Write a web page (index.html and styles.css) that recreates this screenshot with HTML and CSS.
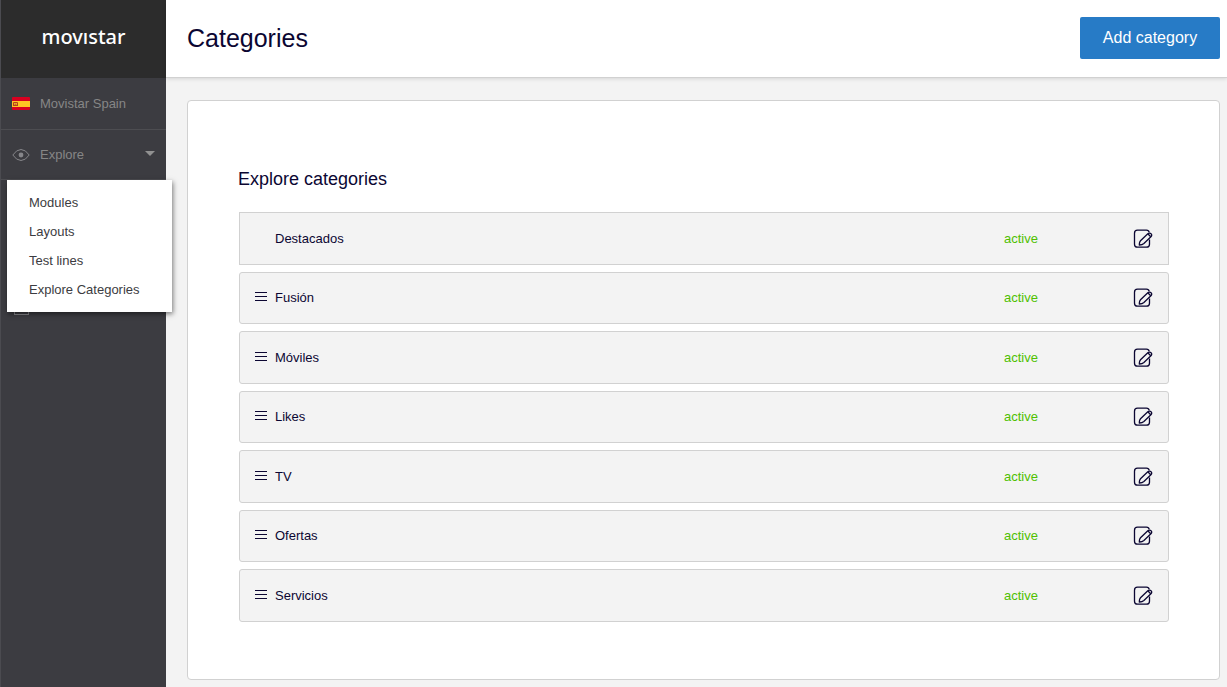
FILE: index.html
```html
<!DOCTYPE html>
<html lang="en">
<head>
<meta charset="utf-8">
<title>Categories</title>
<link rel="stylesheet" href="styles.css">
</head>
<body>
<svg class="sprite" aria-hidden="true">
  <symbol id="edit" viewBox="0 0 20 20">
    <path d="M16.200 3.400Q15.800 1.200 13.500 1.200H4.500A3 3 0 0 0 1.500 4.200V15.200A3 3 0 0 0 4.500 18.200H13.500A3 3 0 0 0 16.500 15.200V10.500"/>
    <path d="M14.800 4.700Q16.800 3.400 18.200 4.900Q19.300 6.300 17.900 7.800L10.900 14.400Q9.300 15.800 6.400 16Q6.100 13.300 7.500 11.700Z"/>
    <path d="M14.800 4.700 17.700 7.800"/>
  </symbol>
  <symbol id="grip" viewBox="0 0 12 10">
    <path d="M0 .5H12M0 4.500H12M0 8.500H12"/>
  </symbol>
</svg>
<div class="app">
  <aside class="sidebar">
    <a class="logo" href="#">movıstar</a>
    <nav class="nav">
      <a class="nav-item" href="#">
        <svg class="nav-icon" viewBox="0 0 18 14" aria-hidden="true">
          <rect x="0" y="0" width="18" height="13" rx="1" fill="#d80020"/>
          <rect x="0" y="4" width="18" height="6" fill="#ffc423"/>
          <path d="M1.500 9V5.500H5.500V9M2.500 7.200H4.500M1 8.500H6" fill="none" stroke="#b5431c"/>
        </svg>
        Movistar Spain
      </a>
      <div class="nav-group">
        <button class="nav-item" type="button" aria-expanded="true">
          <svg class="nav-icon" viewBox="0 0 18 14" aria-hidden="true">
            <path d="M.8 7Q4.500 1.500 9 1.500T17.200 7Q13.500 12.500 9 12.500T.8 7Z" fill="none" stroke="#86868a"/>
            <circle cx="9" cy="7" r="2.400" fill="#86868a"/>
          </svg>
          Explore
          <svg class="caret" viewBox="0 0 10 5" aria-hidden="true"><path d="M0 0H10L5 5Z" fill="#919191"/></svg>
        </button>
        <div class="menu">
          <a href="#">Modules</a>
          <a href="#">Layouts</a>
          <a href="#">Test lines</a>
          <a href="#">Explore Categories</a>
        </div>
      </div>
      <a class="nav-item nav-last" href="#" aria-label="More">
        <svg class="nav-icon" viewBox="0 0 18 14" aria-hidden="true"><rect x="2.500" y=".5" width="14" height="13" fill="none" stroke="#86868a"/></svg>
      </a>
    </nav>
  </aside>
  <main class="main">
    <header class="header">
      <h1>Categories</h1>
      <button class="add" type="button">Add category</button>
    </header>
    <section class="card">
      <h2>Explore categories</h2>
      <ul class="list">
        <li class="row fixed"><span class="grip"></span><span class="name">Destacados</span><span class="status">active</span><button class="edit" type="button" aria-label="Edit Destacados"><svg><use href="#edit"/></svg></button></li>
        <li class="row"><svg class="grip"><use href="#grip"/></svg><span class="name">Fusión</span><span class="status">active</span><button class="edit" type="button" aria-label="Edit Fusión"><svg><use href="#edit"/></svg></button></li>
        <li class="row"><svg class="grip"><use href="#grip"/></svg><span class="name">Móviles</span><span class="status">active</span><button class="edit" type="button" aria-label="Edit Móviles"><svg><use href="#edit"/></svg></button></li>
        <li class="row"><svg class="grip"><use href="#grip"/></svg><span class="name">Likes</span><span class="status">active</span><button class="edit" type="button" aria-label="Edit Likes"><svg><use href="#edit"/></svg></button></li>
        <li class="row"><svg class="grip"><use href="#grip"/></svg><span class="name">TV</span><span class="status">active</span><button class="edit" type="button" aria-label="Edit TV"><svg><use href="#edit"/></svg></button></li>
        <li class="row"><svg class="grip"><use href="#grip"/></svg><span class="name">Ofertas</span><span class="status">active</span><button class="edit" type="button" aria-label="Edit Ofertas"><svg><use href="#edit"/></svg></button></li>
        <li class="row"><svg class="grip"><use href="#grip"/></svg><span class="name">Servicios</span><span class="status">active</span><button class="edit" type="button" aria-label="Edit Servicios"><svg><use href="#edit"/></svg></button></li>
      </ul>
    </section>
  </main>
</div>
</body>
</html>
```

FILE: styles.css
```css
* { box-sizing: border-box; }
body {
  margin: 0;
  background: #f3f3f3;
  color: #0b0632;
  font: 13px/20px "Liberation Sans", Arial, sans-serif;
}
button { font: inherit; border: 0; background: none; padding: 0; cursor: pointer; }
a { color: inherit; text-decoration: none; }
h1, h2 { margin: 0; font-weight: 300; }
.sprite { display: none; }

.app { display: flex; min-height: 100vh; }

.sidebar {
  width: 166px;
  flex: none;
  background: #3c3c41;
  border-left: 1px solid #4b4b50;
}
.logo {
  display: flex;
  align-items: center;
  justify-content: center;
  height: 78px;
  padding-bottom: 4px;
  background: #2c2c2c;
  color: #fff;
  font: 500 20px/28px "Noto Sans", sans-serif;
}
.nav-item {
  display: flex;
  align-items: center;
  width: 100%;
  height: 52px;
  padding: 0 11px;
  border-bottom: 1px solid #4d4d51;
  color: #868686;
  text-align: left;
}
.nav-icon { width: 18px; height: 14px; margin-right: 10px; flex: none; }
.caret { width: 10px; height: 5px; margin: 0 0 3px auto; }
.nav-group { position: relative; }
.nav-group .nav-item { height: 50px; }
.menu {
  position: absolute;
  z-index: 1;
  top: 50px;
  left: 6px;
  width: 165px;
  padding: 8px 22px;
  background: #fff;
  color: #3c3c41;
  box-shadow: 1px 2px 5px rgba(0, 0, 0, .5);
}
.menu a { display: block; line-height: 29px; white-space: nowrap; }
.nav-last { margin-top: 102px; border: 0; }

.main { flex: 1; min-width: 0; }
.header {
  display: flex;
  align-items: center;
  justify-content: space-between;
  height: 78px;
  padding: 0 7px 2px 21px;
  background: #fff;
  border-bottom: 1px solid #d1d1d1;
  box-shadow: 0 1px 4px rgba(0, 0, 0, .12);
}
h1 { font-size: 25px; line-height: 32px; }
.add {
  width: 140px;
  height: 42px;
  border-radius: 2px;
  background: #277bc6;
  color: #fff;
  font-size: 16px;
}
.card {
  margin: 22px 7px 7px 21px;
  padding: 66px 50px 57px;
  background: #fff;
  border: 1px solid #d1d1d1;
  border-radius: 4px;
}
h2 { font-size: 18px; line-height: 24px; }
.list {
  display: flex;
  flex-direction: column;
  gap: 7px;
  margin: 21px 0 0;
  padding: 0 0 0 1px;
  list-style: none;
}
.row {
  display: flex;
  align-items: center;
  height: 52px;
  padding: 0 15px;
  background: #f3f3f3;
  border: 1px solid #d1d1d1;
  border-radius: 3px;
}
.row:nth-child(odd) { height: 53px; }
.row.fixed { border-radius: 0; }
.grip {
  width: 12px;
  height: 10px;
  margin-right: 8px;
  margin-bottom: 2px;
  stroke: #0b0632;
}
.name { flex: 1; }
.status { width: 129px; color: #4fc000; }
.edit svg {
  display: block;
  width: 20px;
  height: 20px;
  fill: none;
  stroke: #0b0632;
  stroke-width: 1.3;
}
```
